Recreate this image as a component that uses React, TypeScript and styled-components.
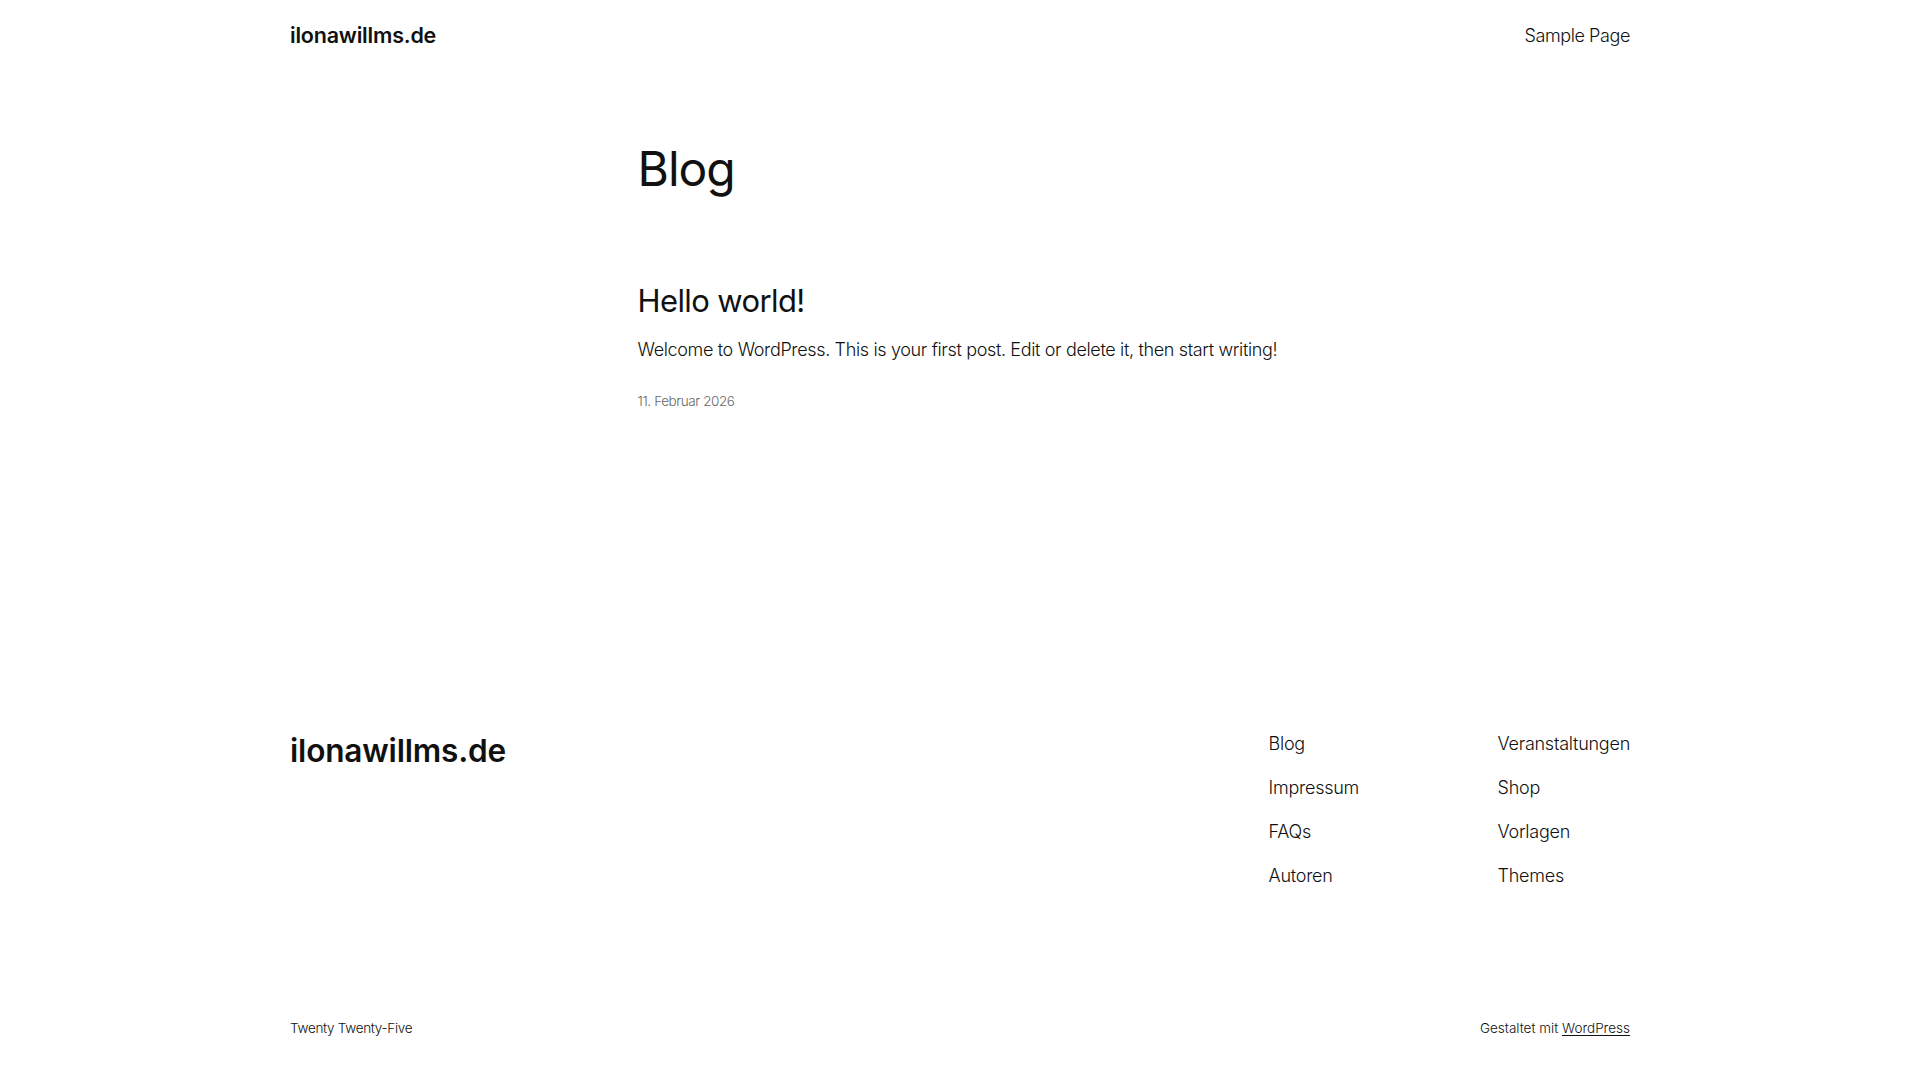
import React from 'react';
import styled, { createGlobalStyle } from 'styled-components';

const GlobalStyle = createGlobalStyle`
  html, body {
    margin: 0;
    padding: 0;
    background: #ffffff;
  }

  body {
    font-family: Inter, 'Noto Sans', 'Liberation Sans', sans-serif;
    color: #111111;
    font-weight: 300;
    letter-spacing: -0.1px;
    -webkit-font-smoothing: antialiased;
  }

  a {
    color: inherit;
    text-decoration: none;
  }
`;

const Page = styled.div`
  display: flex;
  flex-direction: column;
  min-height: 100vh;
`;

const Wide = styled.div`
  width: 1340px;
  margin: 0 auto;
`;

const Header = styled(Wide)`
  display: flex;
  align-items: center;
  justify-content: space-between;
  padding-top: 23px;
`;

const SiteTitle = styled.a<{ size: number }>`
  font-size: ${(p) => p.size}px;
  line-height: 1.2;
  font-weight: 600;
  letter-spacing: -0.2px;
`;

const NavLink = styled.a`
  font-size: 18px;
  line-height: 1.35;
  letter-spacing: -0.4px;
`;

const Main = styled.main`
  width: 645px;
  margin: 91px auto 0;
`;

const PageTitle = styled.h1`
  margin: 0;
  font-size: 48px;
  line-height: 1.2;
  font-weight: 400;
  letter-spacing: -1px;
`;

const Post = styled.article`
  margin-top: 85px;
`;

const PostTitle = styled.h2`
  margin: 0;
  font-size: 31px;
  line-height: 1.2;
  font-weight: 400;
  letter-spacing: -0.6px;
`;

const Excerpt = styled.p`
  margin: 16px 0 0;
  font-size: 18px;
  line-height: 1.6;
  letter-spacing: -0.35px;
  white-space: nowrap;
`;

const PostDate = styled.time`
  display: block;
  margin-top: 28px;
  font-size: 13.5px;
  line-height: 1.4;
  letter-spacing: -0.4px;
  color: #686868;
`;

const Footer = styled.footer`
  margin-top: 321px;
`;

const FooterTop = styled(Wide)`
  display: flex;
  justify-content: space-between;
  align-items: flex-start;
`;

const FooterNav = styled.nav`
  display: grid;
  grid-template-columns: 229px auto;
  margin-top: -1px;
`;

const NavColumn = styled.ul`
  list-style: none;
  margin: 0;
  padding: 0;
  display: flex;
  flex-direction: column;
  gap: 18.8px;
`;

const FooterLink = styled.a`
  display: block;
  font-size: 18px;
  line-height: 1.4;
  letter-spacing: -0.25px;
`;

const FooterBottom = styled(Wide)`
  display: flex;
  justify-content: space-between;
  align-items: center;
  margin-top: 131px;
  padding-bottom: 38px;
  font-size: 13.5px;
  line-height: 1.4;
`;

const Credit = styled.span<{ spacing: number }>`
  letter-spacing: ${(p) => p.spacing}px;
`;

const CreditLink = styled.a`
  text-decoration: underline;
  text-underline-offset: 2px;
  text-decoration-thickness: 1px;
`;

const leftLinks = ['Blog', 'Impressum', 'FAQs', 'Autoren'];
const rightLinks = ['Veranstaltungen', 'Shop', 'Vorlagen', 'Themes'];

export default function App() {
  return (
    <Page>
      <GlobalStyle />
      <Header as="header">
        <SiteTitle href="#" size={21.5}>ilonawillms.de</SiteTitle>
        <NavLink href="#">Sample Page</NavLink>
      </Header>

      <Main>
        <PageTitle>Blog</PageTitle>
        <Post>
          <PostTitle>Hello world!</PostTitle>
          <Excerpt>
            Welcome to WordPress. This is your first post. Edit or delete it, then start writing!
          </Excerpt>
          <PostDate>11. Februar 2026</PostDate>
        </Post>
      </Main>

      <Footer>
        <FooterTop>
          <SiteTitle href="#" size={31.6}>ilonawillms.de</SiteTitle>
          <FooterNav>
            <NavColumn>
              {leftLinks.map((label) => (
                <li key={label}>
                  <FooterLink href="#">{label}</FooterLink>
                </li>
              ))}
            </NavColumn>
            <NavColumn>
              {rightLinks.map((label) => (
                <li key={label}>
                  <FooterLink href="#">{label}</FooterLink>
                </li>
              ))}
            </NavColumn>
          </FooterNav>
        </FooterTop>
        <FooterBottom>
          <Credit spacing={-0.3}>Twenty Twenty-Five</Credit>
          <Credit spacing={0}>
            Gestaltet mit <CreditLink href="#">WordPress</CreditLink>
          </Credit>
        </FooterBottom>
      </Footer>
    </Page>
  );
}
